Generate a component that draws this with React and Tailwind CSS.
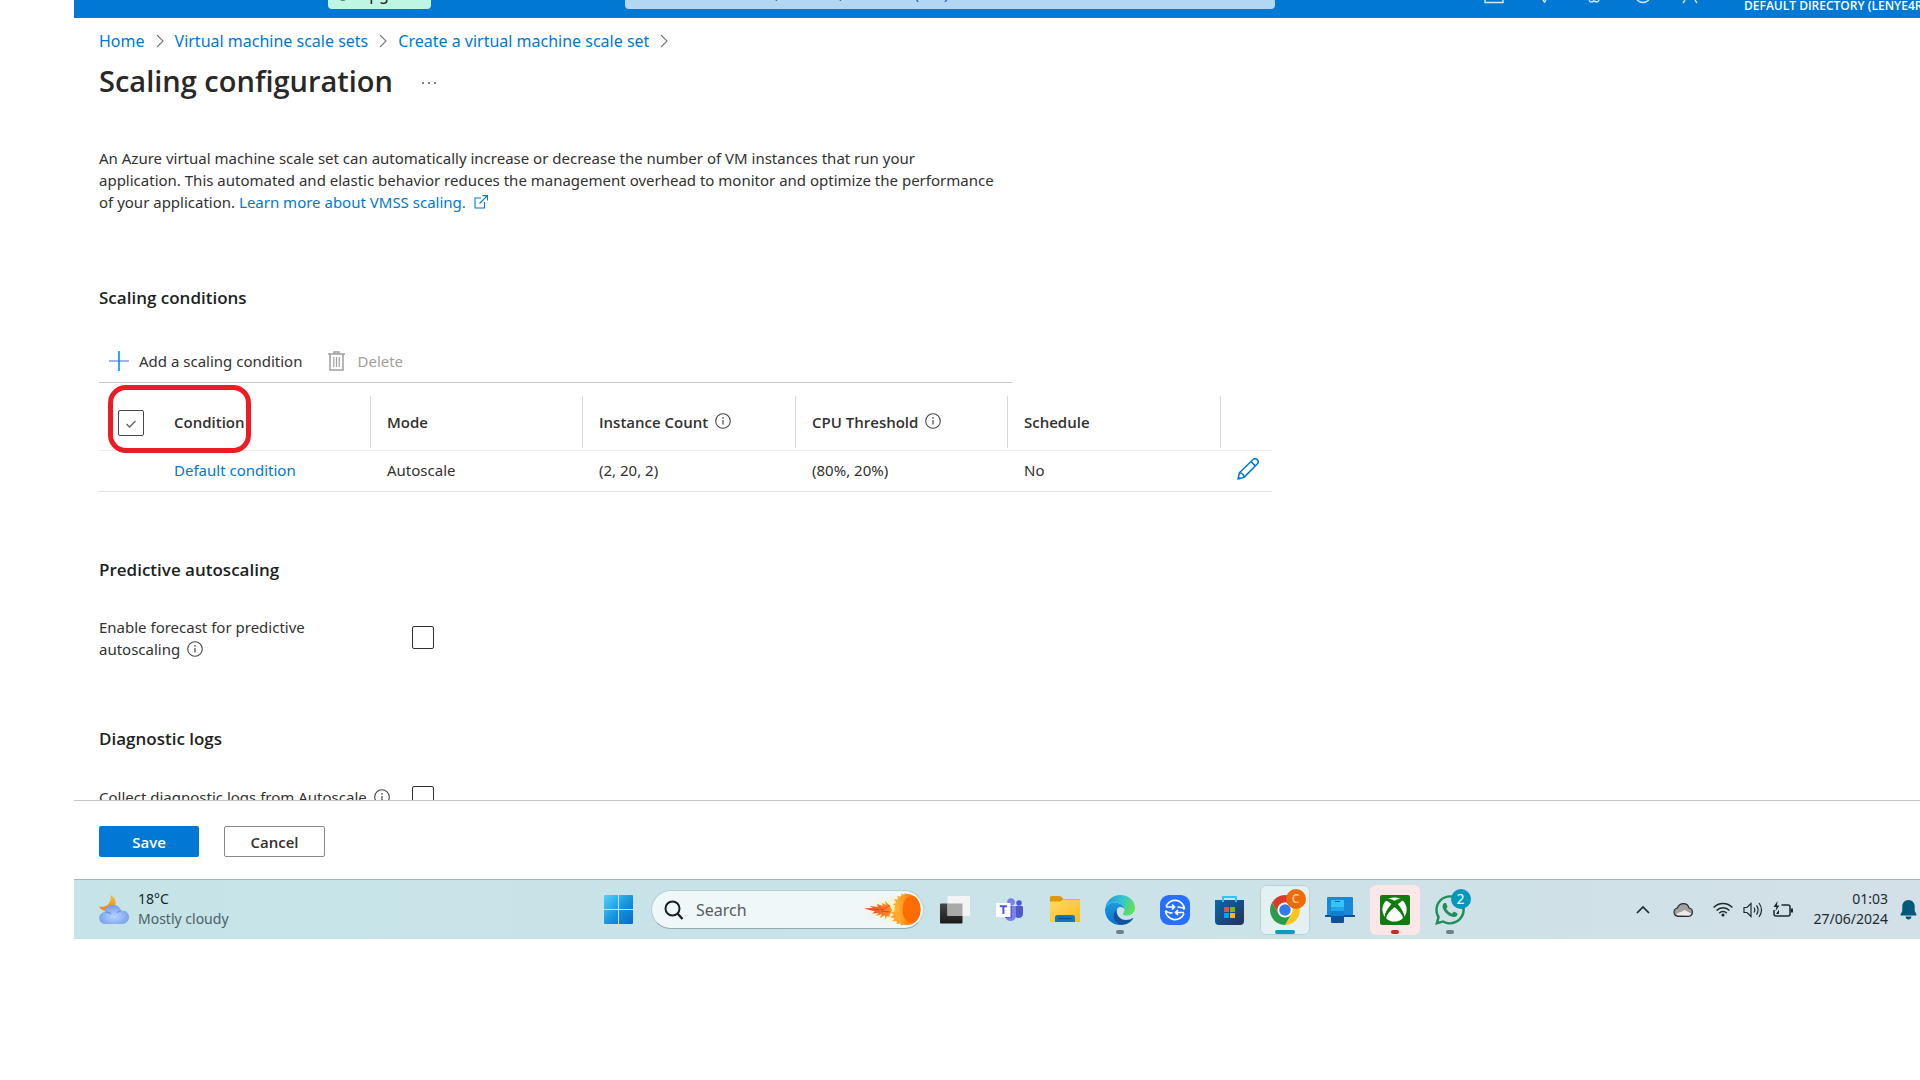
import { FaWhatsapp, FaXbox } from "react-icons/fa";

const columns = [
    { title: "Mode", value: "Autoscale" },
    { title: "Instance Count", value: "(2, 20, 2)", info: true },
    { title: "CPU Threshold", value: "(80%, 20%)", info: true },
    { title: "Schedule", value: "No" },
];

const InfoIcon = ({ className = "" }) => (
    <svg width="16" height="16" viewBox="0 0 16 16" fill="none" className={`shrink-0 ${className}`}>
        <circle cx="8" cy="8" r="7.3" stroke="#484644" strokeWidth="1.1" />
        <path d="M8 7v4.5" stroke="#484644" strokeWidth="1.2" />
        <circle cx="8" cy="4.9" r="0.8" fill="#484644" />
    </svg>
);

const CrumbArrow = () => (
    <svg width="8" height="14" viewBox="0 0 8 14" fill="none" stroke="#797775" strokeWidth="1.1">
        <path d="M1 1l6 6-6 6" />
    </svg>
);

const PencilIcon = () => (
    <svg width="22" height="22" viewBox="0 0 22 22" fill="none" stroke="#0078d4" strokeWidth="1.5" strokeLinejoin="round">
        <path d="M1 21l1.4-6.2L15.8 1.7a2.9 2.9 0 0 1 4.4 4.3L7 19.4z" />
        <path d="M14 3.6l4.3 4.3M2.4 14.8c2.6.2 4.3 1.9 4.6 4.6M1.4 19l1.6 1.6" />
    </svg>
);

const TrashIcon = () => (
    <svg width="17" height="20" viewBox="0 0 17 20" fill="none" stroke="#a19f9d" strokeWidth="1.5">
        <path d="M0 3h17M6 3V1h5v2M2 3v16h13V3" />
        <path d="M5.8 6v10M8.5 6v10M11.2 6v10" strokeWidth="1.2" />
    </svg>
);

// Blue portal bar, only its bottom edge is scrolled into view
const TopBar = () => (
    <header className="flex h-[18px] shrink-0 items-end overflow-hidden bg-[#0078d4] text-white">
        <div className="flex w-full shrink-0 items-end pb-[9px]">
            <button type="button" className="ml-[254px] flex h-[30px] w-[103px] shrink-0 items-center gap-2 rounded-sm bg-[#bdf6e3] px-[8px] text-base text-[#1b1a19]">
                <svg width="15" height="15" viewBox="0 0 15 15" fill="none" stroke="#1b1a19" strokeWidth="1.6">
                    <circle cx="7.500" cy="7.500" r="6" />
                    <path d="M7.500 11V4M4.500 7l3-3 3 3" />
                </svg>
                Upgrade
            </button>
            <div className="ml-[194px] flex h-8 w-[650px] shrink-0 items-center rounded-sm bg-[#b3d6f2] px-[10px] text-[#0b5cab]">
                <input aria-label="Search resources" placeholder="Search resources, services, and docs (G+/)" className="w-full bg-transparent px-5 text-[15px] outline-none placeholder:text-[#0b5cab]" />
            </div>
            <svg width="220" height="10" viewBox="0 0 220 10" fill="none" stroke="#d5e8f8" strokeWidth="1.4" className="-mb-px ml-[208px] shrink-0">
                <path d="M2 0v2.500h18V0M60 0l1.500 2 1.500-2M106 0q1 3 5 1 4 2 5-1M154 0q6 5 12 0M202 0l-2 3M212 0l2 3" />
            </svg>
        </div>
    </header>
);

const WeatherIcon = () => (
    <svg width="30" height="30" viewBox="0 0 30 30">
        <defs>
            <linearGradient id="moon" x1="0" y1="0" x2="0" y2="1">
                <stop offset="0" stopColor="#f5c13c" />
                <stop offset="1" stopColor="#ec8312" />
            </linearGradient>
            <radialGradient id="cloud" cx="0.5" cy="0.6" r="0.6">
                <stop offset="0" stopColor="#b9d3ff" />
                <stop offset="1" stopColor="#6f9bea" />
            </radialGradient>
        </defs>
        <path d="M11.500 0c7 3 7 13-1 15.500C5 17 1 14 0 11.500c6 1.500 13-2 11.500-11.500z" fill="url(#moon)" />
        <path d="M6.500 29a6 6 0 0 1-.7-12C6 12.500 9.500 10 14 10c4 0 7 2 8 5.500 4.500-.5 8 2.500 8 6.500s-3 7-7 7z" fill="url(#cloud)" />
        <path d="M6 17.200c3-.4 5 .6 6 1.800M18 18c1-1.600 2.500-2.300 4-2.400" fill="none" stroke="#6a94e0" strokeWidth="1.200" />
    </svg>
);

const WindowsIcon = () => (
    <svg width="29" height="29" viewBox="0 0 29 29" className="shrink-0">
        <defs>
            <linearGradient id="win" x1="0" y1="0" x2="1" y2="1">
                <stop offset="0" stopColor="#4fd3fb" />
                <stop offset="0.55" stopColor="#1592df" />
                <stop offset="1" stopColor="#0669c5" />
            </linearGradient>
        </defs>
        <path d="M1 0h13v14H0V1a1 1 0 0 1 1-1zM15 0h13a1 1 0 0 1 1 1v13H15zM0 15h14v14H1a1 1 0 0 1-1-1zM15 15h14v13a1 1 0 0 1-1 1H15z" fill="url(#win)" />
    </svg>
);

const CometIcon = () => (
    <svg width="60" height="34" viewBox="0 0 60 34" className="shrink-0">
        <defs>
            <linearGradient id="tail" x1="0" y1="0" x2="1" y2="0">
                <stop offset="0" stopColor="#f0341c" />
                <stop offset="1" stopColor="#fb9a2c" />
            </linearGradient>
            <linearGradient id="sun" x1="0" y1="0" x2="1" y2="0">
                <stop offset="0" stopColor="#ffb63a" />
                <stop offset="0.5" stopColor="#ff8c14" />
                <stop offset="1" stopColor="#ff6a00" />
            </linearGradient>
            <radialGradient id="glow">
                <stop offset="0" stopColor="#fbf08a" stopOpacity="0.85" />
                <stop offset="1" stopColor="#fbf4a8" stopOpacity="0" />
            </radialGradient>
        </defs>
        <ellipse cx="29" cy="17" rx="28" ry="15" fill="url(#glow)" />
        <path d="M1 15.500l9-.5-3-2 8 1-1-3 6 2-1-3 4 2-1-4 5 5 2 4-3 7-2-1-2 3v-4l-5 3 2-4-6 2 3-3-7 .5 3-2z" fill="url(#tail)" />
        <path d="M12 16.500h8l7-4M18 18l9 1" stroke="#ee4420" fill="none" />
        <path d="M44 1l-2.500-1 .5 2-4-1.500 1 3.500-5-1 2 4-5-1 2.500 4-3.500 1 2.500 2.500-1 5-3.500 1 3 2.500-4 2 5 1.500-3 2.500 5 .5-.5 2.500 4-.5.5 2 3.500-1 3 1z" fill="#ffa126" />
        <ellipse cx="44.500" cy="16.500" rx="13" ry="15.500" fill="url(#sun)" />
        <ellipse cx="48.500" cy="16.500" rx="9" ry="13.500" fill="#ff6c02" />
    </svg>
);

const TaskViewIcon = () => (
    <svg width="30" height="28" viewBox="0 0 30 28">
        <defs>
            <linearGradient id="tvb" x1="0" y1="0" x2="0" y2="1">
                <stop offset="0" stopColor="#484644" />
                <stop offset="1" stopColor="#1c1b1a" />
            </linearGradient>
        </defs>
        <rect y="7.500" width="22.500" height="20" rx="1" fill="url(#tvb)" />
        <rect x="7.500" width="22.500" height="20" rx="1" fill="#f4f4f4" />
        <path d="M7.500 7.500h15v12.500h-15z" fill="#a9a9a9" />
    </svg>
);

const TeamsIcon = () => (
    <svg width="27" height="24" viewBox="0 0 27 24">
        <circle cx="15" cy="4" r="3.800" fill="#7b83eb" />
        <circle cx="23" cy="5" r="2.800" fill="#5059c9" />
        <path d="M18 8h8a1 1 0 0 1 1 1v6.500c0 3-2 4.500-4.500 4.500S18 18 18 15.500z" fill="#5059c9" />
        <path d="M9 8h11v9.500a5.500 5.500 0 0 1-11 0z" fill="#7b83eb" />
        <path d="M9 8h7v12H9z" fill="#5a62c8" />
        <path d="M0 5h14.500v14H0z" fill="#fff" />
        <path d="M3.800 8.200h7.200M7.400 8.200V16" stroke="#5059c9" strokeWidth="2" />
    </svg>
);

const FolderIcon = () => (
    <svg width="30" height="27" viewBox="0 0 30 27">
        <defs>
            <linearGradient id="fold" x1="0" y1="0" x2="1" y2="1">
                <stop offset="0" stopColor="#ffda68" />
                <stop offset="1" stopColor="#fbbb1c" />
            </linearGradient>
        </defs>
        <path d="M0 1.500Q0 0 1.500 0h8q1.500 0 2.500 1.500L13.500 3H29q1 0 1 1v5H0z" fill="#dc9a08" />
        <path d="M0 5.500h10.500L13 3.500h17V26H0z" fill="url(#fold)" />
        <path d="M5 26v-4.500q0-2.500 2.500-2.500h15q2.500 0 2.500 2.500V26z" fill="#0f76c8" />
        <path d="M8.500 22.500h13" stroke="#0a4a85" strokeWidth="1.200" />
    </svg>
);

const EdgeIcon = () => (
    <svg width="30" height="30" viewBox="0 0 30 30">
        <defs>
            <linearGradient id="edgeTop" x1="0" y1="0.300" x2="1" y2="0.600">
                <stop offset="0" stopColor="#219bd8" />
                <stop offset="0.500" stopColor="#35c3d2" />
                <stop offset="1" stopColor="#67e34c" />
            </linearGradient>
            <linearGradient id="edgeMid" x1="0" y1="0" x2="0" y2="1">
                <stop offset="0" stopColor="#1b9be0" />
                <stop offset="1" stopColor="#0670d2" />
            </linearGradient>
        </defs>
        <path d="M.4 12C2 5 8 0 15 0c9 0 15 6 15 13 0 5-4 7.500-8 7.500-2.500 0-4-.5-4-1.500s1.500-1.500 1.500-4C19.500 11 15 7.500 9.500 7.500 5 7.500 2 9.500.4 12z" fill="url(#edgeTop)" />
        <path d="M0 15C.3 10 5 7.500 9.500 7.500c5.500 0 9.500 3 10 6.500-1.500-2.500-6-3-7.500 0-4 4-2 13 5 15.900C8 31 0 24 0 15z" fill="url(#edgeMid)" />
        <path d="M12 14c-1.500 6 3 11 9 11 3 0 5.500-1 6.700-2 .5-.2.700.2.500.6C25.500 28 21 30 16.500 30 8.500 28 6 19 12 14z" fill="#12539b" />
    </svg>
);

const SwitchIcon = () => (
    <svg width="30" height="30" viewBox="0 0 30 30" fill="none" stroke="#fff" strokeWidth="1.700">
        <rect width="30" height="30" rx="9" fill="#2670ff" stroke="none" />
        <path d="M6 11.500A9.600 9.600 0 0 1 24.500 14M24 18.500A9.600 9.600 0 0 1 5.500 16" />
        <path d="M6 12h8.500M12 9.500l2.500 2.500-2.500 2.500M24 17.500h-8.500M18 15l-2.500 2.500L18 20" />
        <path d="M5.500 15.500q2 2.500 7 2.500M24.500 14.500q-2-2.500-7-2.500" />
    </svg>
);

const StoreIcon = () => (
    <svg width="29" height="30" viewBox="0 0 29 30">
        <defs>
            <linearGradient id="store" x1="0" y1="0" x2="1" y2="1">
                <stop offset="0" stopColor="#0b67b0" />
                <stop offset="1" stopColor="#26305a" />
            </linearGradient>
        </defs>
        <path d="M0 5h29v21q0 4-4 4H4q-4 0-4-4z" fill="url(#store)" />
        <path d="M8 7V2h13v5" fill="none" stroke="#32c4f5" strokeWidth="2" />
        <path d="M9 12h5v5H9z" fill="#f25022" />
        <path d="M15 12h5v5h-5z" fill="#7fba00" />
        <path d="M9 18h5v5H9z" fill="#00a4ef" />
        <path d="M15 18h5v5h-5z" fill="#ffb900" />
    </svg>
);

const ChromeIcon = () => (
    <svg width="30" height="30" viewBox="0 0 24 24">
        <path d="M1.610 6A12 12 0 0 1 22.390 6L12 6A6 6 0 0 0 6.800 15z" fill="#dc3a2e" />
        <path d="M22.390 6A12 12 0 0 1 12 24L17.200 15A6 6 0 0 0 12 6z" fill="#fcc31e" />
        <path d="M12 24A12 12 0 0 1 1.610 6L6.800 15A6 6 0 0 0 17.200 15z" fill="#2a9b48" />
        <circle cx="12" cy="12" r="5.800" fill="#fff" />
        <circle cx="12" cy="12" r="4.600" fill="#2f7cf0" />
    </svg>
);

const PhoneLinkIcon = () => (
    <svg width="30" height="26" viewBox="0 0 30 26">
        <path d="M3 0h24q1 0 1 1v17H2V1q0-1 1-1z" fill="#1789d8" />
        <path d="M0 18h30v1.500q0 .5-1 .5H1q-1 0-1-.5z" fill="#0d5397" />
        <path d="M6 3h13v7H6z" fill="#38c4f3" />
        <path d="M6 10h13v4H6z" fill="#22a5e8" />
        <path d="M6 14h13v5H6z" fill="#0f7fd4" />
        <path d="M6 19h13v6q0 1-1 1H7q-1 0-1-1z" fill="#10509c" />
        <path d="M10 4.500h5" stroke="#12598f" />
    </svg>
);

const BellIcon = () => (
    <svg width="17" height="20" viewBox="0 0 17 20" fill="#005a78">
        <path d="M8.500 0c4 0 6.200 3 6.200 6.500V11l1.800 3.500q.4 1-.7 1H1.200q-1.100 0-.7-1L2.300 11V6.500C2.300 3 4.500 0 8.500 0zM5.500 16.500h6Q11 19.500 8.500 19.500T5.500 16.500z" />
    </svg>
);

const apps = [
    { name: "Task view", icon: <TaskViewIcon /> },
    { name: "Teams", icon: <TeamsIcon /> },
    { name: "File Explorer", icon: <FolderIcon /> },
    { name: "Edge", icon: <EdgeIcon />, bar: "w-2 bg-[#6f7f84]" },
    { name: "Smart Switch", icon: <SwitchIcon /> },
    { name: "Microsoft Store", icon: <StoreIcon /> },
    {
        name: "Chrome",
        icon: <ChromeIcon />,
        tile: "bg-[#e3f1f3] outline outline-[#b9d2d7] -outline-offset-1",
        bar: "w-5 bg-[#0a9cc0]",
        badge: "C",
        badgeStyle: "bg-[#ec6a08] text-[#ffc896] font-semibold text-xs",
    },
    { name: "Phone Link", icon: <PhoneLinkIcon /> },
    {
        name: "Xbox",
        icon: (
            <span className="flex size-[30px] items-center justify-center rounded-xs bg-[#107c10] text-white">
                <FaXbox size={25} />
            </span>
        ),
        tile: "bg-[#fde6e8]",
        bar: "w-2 bg-[#c42b1c]",
    },
    {
        name: "WhatsApp",
        icon: <FaWhatsapp size={34} color="#1d8f5a" />,
        bar: "w-2 bg-[#6f7f84]",
        badge: "2",
        badgeStyle: "bg-[#0497bb] text-white text-sm",
    },
];

const Taskbar = () => (
    <footer className="flex h-[60px] shrink-0 items-center border-t border-[#a5b4b9] bg-linear-to-r from-[#c6e4e8] via-[#c9e3e8] to-[#d3e0e7] text-sm">
        <div className="flex w-[530px] shrink-0 items-center gap-[9px] pl-[25px]">
            <WeatherIcon />
            <div className="pb-px leading-5">
                <p className="text-[#14282c]">18°C</p>
                <p className="text-[#4c6166]">Mostly cloudy</p>
            </div>
        </div>
        <button type="button" aria-label="Start">
            <WindowsIcon />
        </button>
        <div className="ml-[18px] flex h-[39px] w-[273px] shrink-0 items-center rounded-full border border-[#b4cdd2] border-b-[#93abb1] bg-[#eff7f9] pl-3">
            <svg width="20" height="20" viewBox="0 0 20 20" fill="none" stroke="#1f1f1f" strokeWidth="2" className="shrink-0">
                <circle cx="8.500" cy="8.500" r="7" />
                <path d="M13.500 13.500l5 5.500" strokeWidth="2.400" />
            </svg>
            <input type="search" aria-label="Search Windows" placeholder="Search" className="ml-3 w-0 min-w-0 flex-1 bg-transparent text-base outline-none placeholder:text-[#575c5e]" />
            <CometIcon />
        </div>
        <div className="ml-[3px] flex">
            {apps.map((app) => (
                <button key={app.name} type="button" aria-label={app.name} className="flex w-[55px] justify-center">
                    <span className={`relative flex size-[50px] items-center justify-center rounded-md ${app.tile || ""}`}>
                        {app.icon}
                        {app.badge && (
                            <span className={`absolute top-1 right-1 flex size-5 items-center justify-center rounded-full ${app.badgeStyle}`}>
                                {app.badge}
                            </span>
                        )}
                        {app.bar && <span className={`absolute bottom-px h-1 rounded-full ${app.bar}`} />}
                    </span>
                </button>
            ))}
        </div>
        <div className="ml-auto flex shrink-0 items-center pr-[3px] text-[#1d2b2f]">
            <svg width="14" height="9" viewBox="0 0 14 9" fill="none" stroke="currentColor" strokeWidth="1.700">
                <path d="M1 8l6-6 6 6" />
            </svg>
            <svg width="20" height="14" viewBox="0 0 20 14" className="ml-[23px]">
                <path d="M5 13.300a4.200 4.200 0 0 1-.6-8.300C5.500 2 8 .7 10.500.7c2.800 0 4.800 1.500 5.500 4.300 2.200.3 3.400 2 3.400 4.100 0 2.400-1.700 4.200-4 4.200z" fill="#a2a2a2" stroke="#2a2a2a" strokeWidth="1.200" />
                <path d="M3.500 12c1-3 5-2.500 8-5l6.500 3.500c-.5 1.500-1.500 2-2.600 2z" fill="#ececec" />
            </svg>
            <svg width="20" height="15" viewBox="0 0 20 15" fill="none" stroke="currentColor" strokeWidth="1.400" className="ml-5">
                <path d="M.6 5.500a13 13 0 0 1 18.800 0M3.500 8.500a9 9 0 0 1 13 0M6.200 11.200a5.200 5.200 0 0 1 7.600 0" />
                <circle cx="10" cy="13" r="1.600" fill="currentColor" stroke="none" />
            </svg>
            <svg width="20" height="16" viewBox="0 0 20 16" fill="none" stroke="currentColor" strokeWidth="1.200" className="ml-[10px]">
                <path d="M1 5.500h3l4-4v13l-4-4H1zM11 5.500q1.600 2.500 0 5M13.500 3.300q3.200 4.700 0 9.400M16 1q5 7 0 14" />
            </svg>
            <svg width="20" height="18" viewBox="0 0 20 18" fill="none" stroke="currentColor" strokeWidth="1.500" className="ml-[10px]">
                <path d="M8.500 4h6.500q2 0 2 2v7q0 2-2 2H3q-2 0-2-2V9" />
                <path d="M18.800 7.500v4" strokeWidth="2.400" />
                <path d="M4.500 0L.5 6h2.800L2.500 10 6.500 4.500H4z" fill="currentColor" stroke="none" />
                <path d="M3 13l3-4.500V13z" fill="currentColor" stroke="none" />
            </svg>
            <div className="ml-[21px] pb-px text-right leading-5">
                <p>01:03</p>
                <p>27/06/2024</p>
            </div>
            <button type="button" aria-label="Notifications" className="ml-3">
                <BellIcon />
            </button>
        </div>
    </footer>
);

const ConditionsTable = () => (
    <table className="mt-[13px] w-[1173px] table-fixed border-collapse text-left">
        <colgroup>
            <col className="w-[59px]" />
            <col className="w-[213px]" />
            <col className="w-[212px]" />
            <col className="w-[213px]" />
            <col className="w-[212px]" />
            <col className="w-[213px]" />
            <col className="w-[51px]" />
        </colgroup>
        <thead>
            <tr className="border-b border-[#edebe9]">
                <th className="relative p-0 pl-[19px]">
                    <label className="relative block size-[26px]">
                        <input type="checkbox" defaultChecked aria-label="Select all conditions" className="block size-[26px] appearance-none rounded-xs border border-[#484644]" />
                        <svg width="10" height="8" viewBox="0 0 10 8" fill="none" stroke="#605e5c" strokeWidth="1.300" className="absolute top-[10px] left-2">
                            <path d="M.5 4L3.500 7 9.500 1" />
                        </svg>
                    </label>
                    {/* red marker around the select-all box and the Condition heading */}
                    <span className="pointer-events-none absolute -top-[11px] left-[9px] h-[68px] w-[143px] rounded-[18px] border-[5px] border-[#ed1c24]" />
                </th>
                <th className="p-0 pb-[2px] font-['Open_Sans',sans-serif] font-semibold">
                    <div className="flex h-[52px] items-center border-r border-[#dcdad8] pl-4">Condition</div>
                </th>
                {columns.map((col) => (
                    <th key={col.title} className="p-0 pb-[2px] font-['Open_Sans',sans-serif] font-semibold">
                        <div className="flex h-[52px] items-center gap-[7px] border-r border-[#dcdad8] pl-4">
                            {col.title}
                            {col.info && <InfoIcon className="mb-[2px]" />}
                        </div>
                    </th>
                ))}
                <th className="p-0" />
            </tr>
        </thead>
        <tbody>
            <tr className="h-[41px] border-b border-[#e5e3e1]">
                <td />
                <td className="p-0 pb-[2px] pl-4">
                    <a href="#condition" className="text-[#0078d4]">Default condition</a>
                </td>
                {columns.map((col) => (
                    <td key={col.title} className="p-0 pb-[2px] pl-4">{col.value}</td>
                ))}
                <td className="p-0 pb-1 pl-4">
                    <button type="button" aria-label="Edit condition" className="block">
                        <PencilIcon />
                    </button>
                </td>
            </tr>
        </tbody>
    </table>
);

export default function App() {
    return (
        <div className="flex h-screen flex-col bg-white pb-[141px] pl-[74px] font-['Noto_Sans','Open_Sans',sans-serif] text-[15px] leading-[22px] text-[#323130]">
            <div className="relative flex shrink-0 flex-col overflow-hidden">
                <TopBar />
                <span className="absolute -top-[3px] left-[1670px] font-['Open_Sans',sans-serif] text-xs leading-[18px] font-semibold whitespace-nowrap text-white">
                    DEFAULT DIRECTORY (LENYE4R
                </span>
            </div>
            <main className="min-h-0 flex-1 overflow-hidden pl-[25px]">
                <nav className="flex items-center gap-[11px] pt-[11px] text-base text-[#0078d4]">
                    <a href="#home">Home</a>
                    <CrumbArrow />
                    <a href="#sets">Virtual machine scale sets</a>
                    <CrumbArrow />
                    <a href="#create">Create a virtual machine scale set</a>
                    <CrumbArrow />
                </nav>
                <div className="mt-[6px] flex items-center gap-7">
                    <h1 className="font-['Open_Sans',sans-serif] text-[29px] leading-[44px] font-semibold text-[#292827]">Scaling configuration</h1>
                    <button type="button" aria-label="More options" className="pt-1">
                        <svg width="16" height="4" viewBox="0 0 16 4" fill="#605e5c">
                            <circle cx="2" cy="2" r="1" />
                            <circle cx="8" cy="2" r="1" />
                            <circle cx="14" cy="2" r="1" />
                        </svg>
                    </button>
                </div>
                <p className="mt-11 max-w-[940px]">
                    An Azure virtual machine scale set can automatically increase or decrease the number of VM instances that run your
                    <br />
                    application. This automated and elastic behavior reduces the management overhead to monitor and optimize the performance
                    <br />
                    of your application.{" "}
                    <a href="#learn" className="text-[#0078d4]">
                        Learn more about VMSS scaling.
                        <svg width="14" height="14" viewBox="0 0 14 14" fill="none" stroke="currentColor" strokeWidth="1.100" className="ml-2 inline-block align-[-1px]">
                            <path d="M7 3H1v10h9.500V7M8.500.6h5v5M13.500.6L5.500 8.500" />
                        </svg>
                    </a>
                </p>
                <h2 className="mt-[74px] font-['Open_Sans',sans-serif] text-[17px] leading-[22px] font-semibold text-[#201f1e]">Scaling conditions</h2>
                <div className="mt-[31px] flex h-[43px] max-w-[913px] items-center border-b border-[#c8c6c4] pl-[10px]">
                    <button type="button" className="flex items-center gap-[10px]">
                        <svg width="20" height="20" viewBox="0 0 20 20" fill="none">
                            <path d="M0 10h20" stroke="#8a9fe0" strokeWidth="1.600" />
                            <path d="M10 0v20" stroke="#0091ea" strokeWidth="1.600" />
                        </svg>
                        Add a scaling condition
                    </button>
                    <button type="button" disabled className="ml-[26px] flex items-center gap-3 text-[#a19f9d]">
                        <TrashIcon />
                        Delete
                    </button>
                </div>
                <ConditionsTable />
                <h2 className="mt-[67px] font-['Open_Sans',sans-serif] text-[17px] leading-[22px] font-semibold text-[#201f1e]">Predictive autoscaling</h2>
                <div className="mt-[35px] flex items-center">
                    <label htmlFor="forecast" className="w-[313px]">
                        Enable forecast for predictive
                        <span className="flex items-center gap-[7px]">
                            autoscaling <InfoIcon />
                        </span>
                    </label>
                    <input id="forecast" type="checkbox" className="mb-px h-[23px] w-[22px] appearance-none rounded-xs border border-[#323130]" />
                </div>
                <h2 className="mt-[68px] font-['Open_Sans',sans-serif] text-[17px] leading-[22px] font-semibold text-[#201f1e]">Diagnostic logs</h2>
                <div className="mt-9 flex items-start">
                    <label htmlFor="logs" className="flex w-[313px] items-center gap-[7px] whitespace-nowrap">
                        Collect diagnostic logs from Autoscale <InfoIcon />
                    </label>
                    <input id="logs" type="checkbox" className="h-[23px] w-[22px] appearance-none rounded-xs border border-[#323130]" />
                </div>
            </main>
            <div className="flex shrink-0 gap-[25px] border-t border-[#c8c6c4] py-[25px] pb-[22px] pl-[25px] font-['Open_Sans',sans-serif] font-semibold">
                <button type="button" className="h-[31px] w-[100px] rounded-xs bg-[#0078d4] text-white">
                    Save
                </button>
                <button type="button" className="h-[31px] w-[101px] rounded-xs border border-[#8a8886]">
                    Cancel
                </button>
            </div>
            <Taskbar />
        </div>
    );
}
